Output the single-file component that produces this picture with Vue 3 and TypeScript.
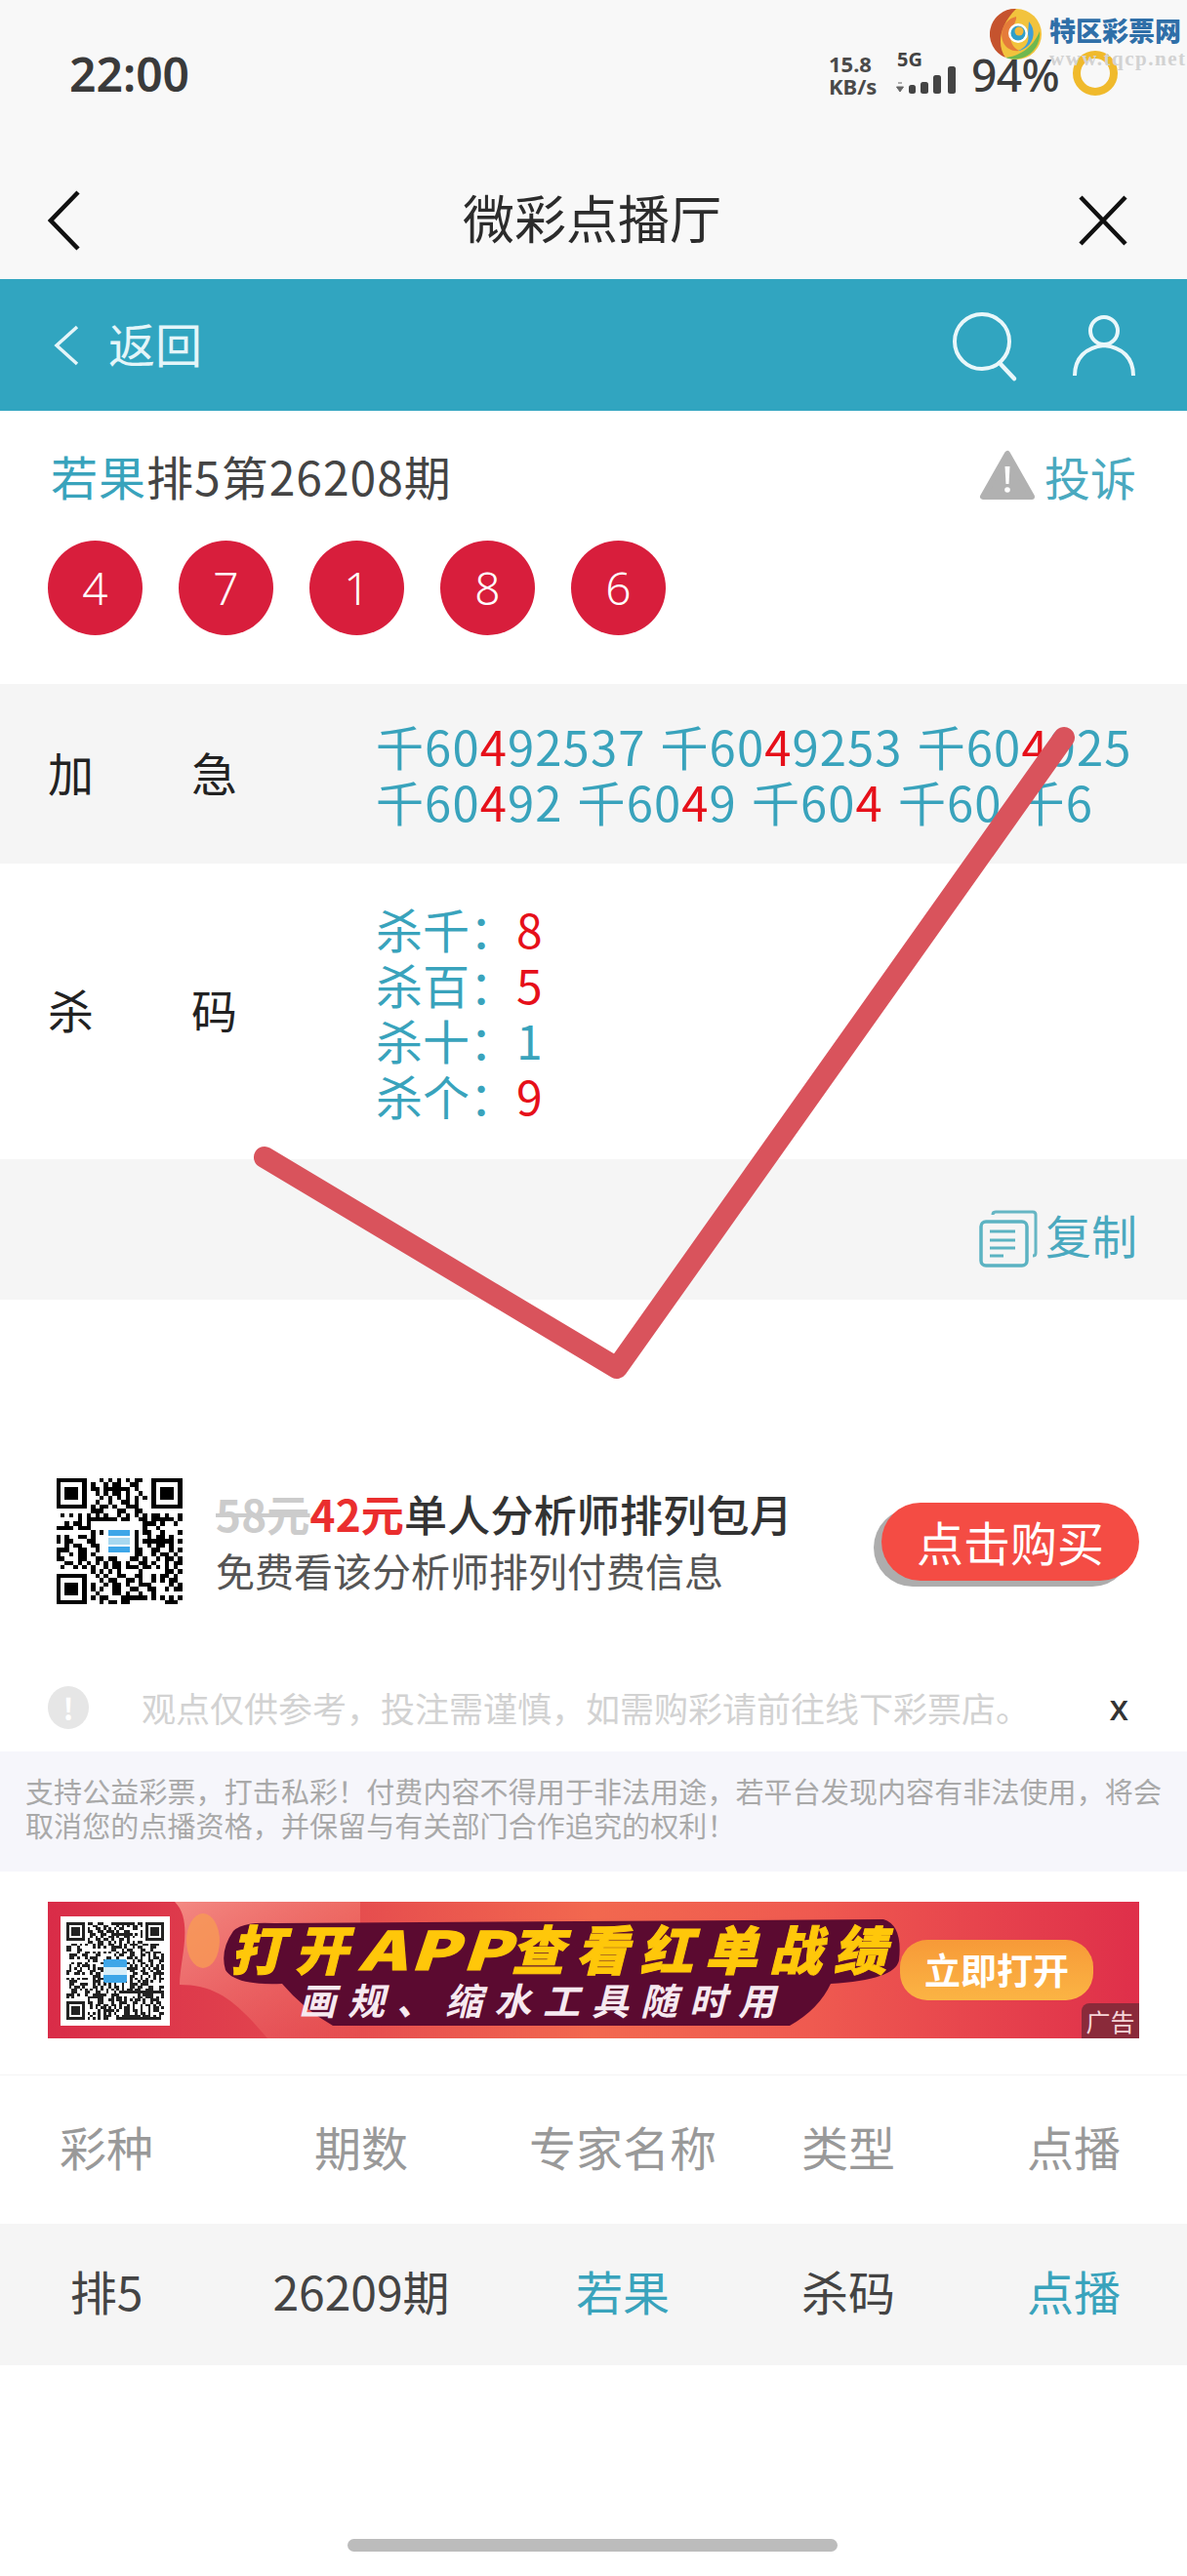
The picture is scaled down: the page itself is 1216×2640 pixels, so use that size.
<script setup lang="ts">
function makeQr(n: number, seed: number): string {
  let s = seed;
  const rnd = () => {
    s = (s * 1103515245 + 12345) & 0x7fffffff;
    return (s >> 12) & 1;
  };
  const inFinder = (x: number, y: number) =>
    (x < 8 && y < 8) || (x >= n - 8 && y < 8) || (x < 8 && y >= n - 8);
  let d = "";
  const cell = (x: number, y: number, w = 1, h = 1) => {
    d += `M${x} ${y}h${w}v${h}h${-w}z`;
  };
  const finder = (x: number, y: number) => {
    cell(x, y, 7, 1);
    cell(x, y + 6, 7, 1);
    cell(x, y + 1, 1, 5);
    cell(x + 6, y + 1, 1, 5);
    cell(x + 2, y + 2, 3, 3);
  };
  finder(0, 0);
  finder(n - 7, 0);
  finder(0, n - 7);
  const c = Math.floor(n / 2);
  for (let y = 0; y < n; y++) {
    for (let x = 0; x < n; x++) {
      if (inFinder(x, y)) continue;
      if (Math.abs(x - c) <= 3 && Math.abs(y - c) <= 3) continue;
      if (rnd()) cell(x, y);
    }
  }
  return d;
}
const qrLarge = makeQr(29, 77);
const qrSmall = makeQr(37, 4242);

const balls = [4, 7, 1, 8, 6];
const lines = [
  ["60|4|92537", "60|4|9253", "60|4|925"],
  ["60|4|92", "60|4|9", "60|4|", "60||", "6||"],
];
const kills = [
  { name: "杀千：", value: "8", red: true },
  { name: "杀百：", value: "5", red: true },
  { name: "杀十：", value: "1", red: false },
  { name: "杀个：", value: "9", red: true },
];
const heads = ["彩种", "期数", "专家名称", "类型", "点播"];
</script>

<template>
  <div class="page">
    <header class="status">
      <span class="time">22:00</span>
      <div class="status-right">
        <div class="speed"><span>15.8</span><span>KB/s</span></div>
        <div class="net">
          <span class="net-label">5G</span>
          <svg class="bars" viewBox="0 0 68 30" width="68" height="30">
            <path d="M3 18l4 0M1.500 22h7l-3.500 5z" fill="#666" stroke="#666" stroke-width="1" />
            <rect x="14" y="20" width="7" height="9" rx="2.500" fill="#444" />
            <rect x="26" y="17" width="8" height="12" rx="2.500" fill="#444" />
            <rect x="39" y="10" width="8" height="19" rx="2.500" fill="#444" />
            <rect x="54" y="1" width="8" height="28" rx="2.500" fill="#444" />
          </svg>
        </div>
        <span class="battery">94%</span>
        <span class="ring"></span>
      </div>
    </header>

    <div class="titlebar">
      <svg class="tb-back" viewBox="0 0 34 62" width="34" height="62">
        <path d="M31 2 3 31l28 29" fill="none" stroke="#111" stroke-width="4.500" />
      </svg>
      <span class="tb-title">微彩点播厅</span>
      <svg class="tb-close" viewBox="0 0 52 52" width="52" height="52">
        <path d="M3 2l46 48M49 2 3 50" fill="none" stroke="#111" stroke-width="4.500" />
      </svg>
    </div>

    <nav class="teal">
      <svg class="teal-back" viewBox="0 0 26 42" width="26" height="42">
        <path d="M24 2 3 21l21 19" fill="none" stroke="#e4f5f9" stroke-width="3.500" />
      </svg>
      <span class="teal-text">返回</span>
      <svg class="teal-search" viewBox="0 0 70 72" width="70" height="72">
        <circle cx="32" cy="30" r="28" fill="none" stroke="#e9f7fa" stroke-width="4" />
        <path d="M50 52l15 16" fill="none" stroke="#e9f7fa" stroke-width="4.500" stroke-linecap="round" />
      </svg>
      <svg class="teal-user" viewBox="0 0 66 64" width="66" height="64">
        <circle cx="33" cy="16" r="14" fill="none" stroke="#e9f7fa" stroke-width="4" />
        <path d="M3 62C3 44 14 33 33 31c19 2 30 13 30 31" fill="none" stroke="#e9f7fa" stroke-width="4" />
      </svg>
    </nav>

    <section class="info">
      <div class="info-head">
        <div class="info-title"><span class="teal-c">若果</span>排5第26208期</div>
        <div class="side-action">
          <svg viewBox="0 0 60 54" width="60" height="54">
            <path d="M30 4 5 48h50z" fill="#b1b1b1" stroke="#b1b1b1" stroke-width="6" stroke-linejoin="round" />
            <path d="M27.500 17h5l-1 18h-3z" fill="#fff" />
            <circle cx="30" cy="41" r="2.800" fill="#fff" />
          </svg>
          <span>投诉</span>
        </div>
      </div>
      <div class="balls">
        <span v-for="(b, i) in balls" :key="i" class="ball">{{ b }}</span>
      </div>
    </section>

    <section class="row row-urgent">
      <div class="label"><span>加</span><span>急</span></div>
      <div class="value">
        <div v-for="(line, i) in lines" :key="i" class="combo-line">
          <span v-for="(combo, j) in line" :key="j" class="combo">千{{ combo.split("|")[0] }}<span class="red-c">{{ combo.split("|")[1] }}</span>{{ combo.split("|")[2] }}</span>
        </div>
      </div>
    </section>

    <section class="row row-kill">
      <div class="label"><span>杀</span><span>码</span></div>
      <div class="value">
        <div v-for="k in kills" :key="k.name" class="kill-line">
          {{ k.name }}<span :class="k.red ? 'red-c' : ''">{{ k.value }}</span>
        </div>
      </div>
    </section>

    <section class="copy">
      <div class="side-action">
        <svg class="copy-icon" viewBox="0 0 60 59" width="60" height="59">
          <path d="M14 5c0-2 1-3 3-3h38c2 0 3 1 3 3v39c0 2-1 3-3 3" fill="none" stroke="#66b6c4" stroke-width="3" />
          <rect x="2" y="12" width="47" height="45" rx="5" fill="none" stroke="#5bb3c2" stroke-width="3.500" />
          <path d="M11 22h26M11 31h26M11 39h26M11 47h14" fill="none" stroke="#5bb3c2" stroke-width="3" />
        </svg>
        <span>复制</span>
      </div>
    </section>

    <section class="promo">
      <div class="qr-large">
        <svg viewBox="0 0 29 29" width="130" height="129" shape-rendering="crispEdges">
          <path :d="qrLarge" fill="#000" />
          <rect x="11.500" y="11.500" width="6" height="6" fill="#fff" />
          <rect x="12" y="12" width="5" height="1.300" fill="#3ea6e8" />
          <rect x="12" y="13.800" width="5" height="1.400" fill="#a8d8f0" />
          <rect x="12" y="15.700" width="5" height="1.300" fill="#3ea6e8" />
        </svg>
      </div>
      <div class="promo-text">
        <div class="promo-title"><span class="old">58元</span><span class="new">42元</span>单人分析师排列包月</div>
        <div class="promo-sub">免费看该分析师排列付费信息</div>
      </div>
      <div class="buy">点击购买</div>
    </section>

    <section class="notice">
      <span class="notice-icon">!</span>
      <span class="notice-text">观点仅供参考，投注需谨慎，如需购彩请前往线下彩票店。</span>
      <span class="notice-close">x</span>
    </section>

    <section class="legal">
      支持公益彩票，打击私彩！付费内容不得用于非法用途，若平台发现内容有非法使用，将会取消您的点播资格，并保留与有关部门合作追究的权利！
    </section>

    <section class="banner">
      <svg class="banner-deco" viewBox="0 0 1118 140" width="1118" height="140">
        <defs>
          <linearGradient id="swoosh" x1="0" y1="0" x2="1" y2="1">
            <stop offset="0" stop-color="#ffb4a0" stop-opacity="0.650" />
            <stop offset="1" stop-color="#ff9a80" stop-opacity="0" />
          </linearGradient>
        </defs>
        <path d="M130 0C150 20 135 60 135 85c40 0 60 20 90 55H320V0z" fill="url(#swoosh)" />
        <ellipse cx="159" cy="40" rx="17" ry="28" fill="#f79a55" opacity="0.800" />
        <path
          d="M190 30Q200 20 232 22L856 18Q876 24 872 60 868 80 802 84 790 110 760 127L292 127Q262 110 240 84 192 86 182 70 176 50 190 30z"
          fill="#5b0a30"
        />
      </svg>
      <div class="banner-qr">
        <svg viewBox="0 0 37 37" width="100" height="100" shape-rendering="crispEdges">
          <path :d="qrSmall" fill="#222" />
          <rect x="14" y="14" width="9" height="9" rx="1.500" fill="#3ea6e8" />
          <rect x="14" y="17" width="9" height="3" fill="#d6eefa" />
        </svg>
      </div>
      <div class="banner-main">打开<span class="banner-app">APP</span>查看红单战绩</div>
      <div class="banner-sub">画规、缩水工具随时用</div>
      <div class="banner-btn">立即打开</div>
      <div class="banner-ad">广告</div>
    </section>

    <section class="table">
      <div class="t-row t-head">
        <span v-for="h in heads" :key="h">{{ h }}</span>
      </div>
      <div class="t-row t-data">
        <span>排5</span>
        <span>26209期</span>
        <span class="teal-c">若果</span>
        <span>杀码</span>
        <span class="teal-c">点播</span>
      </div>
    </section>

    <div class="home-bar"></div>

    <svg class="check" viewBox="0 0 1216 2640" width="1216" height="2640">
      <path
        d="M271 1186 632 1402 1090 756"
        fill="none"
        stroke="#d9535c"
        stroke-width="22"
        stroke-linecap="round"
        stroke-linejoin="round"
      />
    </svg>

    <div class="watermark">
      <svg viewBox="0 0 54 54" width="54" height="54">
        <circle cx="27" cy="27" r="26" fill="#f2c33d" />
        <path d="M27 1A26 26 0 0 0 16 51C8 40 8 20 27 1z" fill="#c5532e" />
        <path d="M51 24A26 26 0 0 1 16 51C28 50 44 42 51 24z" fill="#6fb84f" />
        <path d="M27 9C15 12 9 24 14 36c3 6 10 9 16 8-7-4-10-10-8-18 1-7 6-13 5-17z" fill="#e57b3a" />
        <path d="M40 14c7 8 6 20-2 26-3 2-6 4-9 4 8-3 12-10 10-17z" fill="#3f9ed9" />
        <circle cx="29" cy="26" r="10" fill="#fff" />
        <circle cx="29" cy="26" r="7.500" fill="#2f9fc9" />
        <circle cx="30" cy="24" r="4.500" fill="#f2b93b" />
      </svg>
      <div class="wm-text">
        <span class="wm-name">特区彩票网</span>
        <span class="wm-url">www.tqcp.net</span>
      </div>
    </div>
  </div>
</template>

<style scoped>
.page {
  position: relative;
  width: 1216px;
  height: 2640px;
  overflow: hidden;
  background: #fff;
  font-family: "Noto Sans CJK SC", "Noto Sans", sans-serif;
  color: #333;
}
.teal-c { color: #39a3bc; }
.red-c { color: #e6101a; }

.status {
  height: 158px;
  box-sizing: border-box;
  background: #f8f8f8;
  padding: 46px 71px 0;
  display: flex;
  justify-content: space-between;
  align-items: flex-start;
}
.time {
  font-family: "Noto Sans", sans-serif;
  font-size: 48px;
  line-height: 60px;
  font-weight: 600;
  color: #3a3a3a;
}
.status-right {
  display: flex;
  align-items: flex-start;
  color: #3c3c3c;
}
.speed {
  display: flex;
  flex-direction: column;
  width: 70px;
  font-family: "Noto Sans", sans-serif;
  font-size: 22px;
  line-height: 23px;
  font-weight: 700;
  margin-top: 8px;
  color: #4a4a4a;
}
.net {
  display: flex;
  flex-direction: column;
  width: 76px;
  margin-top: 5px;
}
.net-label {
  font-family: "Noto Sans", sans-serif;
  font-size: 20px;
  line-height: 20px;
  font-weight: 700;
  color: #444;
}
.bars { margin-top: -4px; margin-left: -2px; }
.battery {
  font-family: "Noto Sans", sans-serif;
  font-size: 46px;
  line-height: 60px;
  font-weight: 500;
  color: #3c3c3c;
  width: 104px;
  letter-spacing: -0.500px;
}
.ring {
  width: 46px;
  height: 46px;
  box-sizing: border-box;
  border-radius: 50%;
  border: 8px solid #f0ba2c;
  margin-top: 6px;
}

.titlebar {
  height: 128px;
  background: #f8f8f8;
  display: flex;
  align-items: center;
  justify-content: space-between;
  padding: 0 60px 0 49px;
}
.tb-back, .tb-close { flex: none; margin-top: 8px; }
.tb-title {
  font-size: 53px;
  line-height: 60px;
  color: #2c2c2c;
  margin-left: 26px;
}

.teal {
  height: 135px;
  background: #31a5c0;
  display: flex;
  align-items: center;
  padding: 0 52px 0 55px;
}
.teal-text {
  font-size: 48px;
  line-height: 60px;
  color: #e4f5f9;
  margin-left: 30px;
  margin-right: auto;
  margin-bottom: 6px;
}
.teal-search { margin-top: 4px; margin-right: 54px; }
.teal-user { margin-top: 2px; }

.info {
  height: 280px;
  box-sizing: border-box;
  padding: 40px 52px 0 49px;
}
.info-head {
  display: flex;
  justify-content: space-between;
  align-items: center;
  height: 54px;
}
.info-title {
  font-size: 48px;
  line-height: 54px;
  letter-spacing: 1px;
  padding-left: 3px;
  color: #444;
  margin-top: -2px;
}
.side-action {
  display: flex;
  align-items: center;
  gap: 8px;
  font-size: 47px;
  line-height: 54px;
  color: #4aa9bf;
}
.balls {
  display: flex;
  gap: 37px;
  margin-top: 39px;
}
.ball {
  width: 97px;
  height: 97px;
  border-radius: 50%;
  background: #d81e3c;
  color: #fff;
  font-size: 46px;
  line-height: 97px;
  text-align: center;
  font-family: "Noto Sans", sans-serif;
  font-weight: 300;
}

.row {
  display: flex;
  align-items: center;
  padding-left: 49px;
}
.row-urgent { height: 184px; background: #f5f5f5; }
.row-kill { height: 303px; }
.label {
  width: 194px;
  display: flex;
  justify-content: space-between;
  font-size: 47px;
  line-height: 56px;
  color: #222;
  flex: none;
  margin-top: -5px;
}
.value {
  font-size: 49px;
  line-height: 57px;
  color: #39a3bc;
  margin-left: 142px;
}
.row-urgent .value { margin-top: -3px; }
.combo-line {
  display: flex;
  gap: 15px;
  white-space: nowrap;
}
.combo { letter-spacing: 1.100px; }
.kill-line {
  font-size: 48px;
  white-space: nowrap;
}

.copy {
  height: 144px;
  box-sizing: border-box;
  background: #f5f5f5;
  display: flex;
  align-items: center;
  justify-content: flex-end;
  padding: 10px 51px 0 0;
}
.copy-icon { margin-top: 8px; }

.promo {
  margin-top: 183px;
  height: 129px;
  display: flex;
  align-items: center;
  padding: 0 49px 0 57px;
  position: relative;
}
.qr-large { width: 130px; height: 129px; flex: none; }
.promo-text { margin-left: 34px; flex: 1; margin-top: -3px; }
.promo-title {
  font-size: 44px;
  line-height: 56px;
  font-weight: 500;
  letter-spacing: 0.200px;
  color: #333;
  white-space: nowrap;
}
.old {
  color: #ccc;
  text-decoration: line-through;
  font-weight: 700;
  font-size: 44px;
}
.new { color: #ea2e2e; font-weight: 700; font-size: 44px; }
.promo-sub {
  font-size: 40px;
  line-height: 50px;
  margin-top: 5px;
  color: #555;
  white-space: nowrap;
}
.buy {
  width: 264px;
  height: 80px;
  border-radius: 40px;
  background: #f44c44;
  color: #fff;
  font-size: 48px;
  line-height: 78px;
  text-align: center;
  box-shadow: -8px 6px 0 #adadad;
  flex: none;
}

.notice {
  margin-top: 84px;
  height: 44px;
  display: flex;
  align-items: center;
  padding-left: 49px;
  position: relative;
}
.notice-icon {
  width: 42px;
  height: 44px;
  border-radius: 50%;
  background: #e6e6e6;
  color: #fff;
  font-size: 30px;
  line-height: 44px;
  font-weight: 700;
  text-align: center;
}
.notice-text {
  margin-left: 54px;
  font-size: 35px;
  line-height: 44px;
  color: #d2d2d2;
  white-space: nowrap;
}
.notice-close {
  margin-left: auto;
  margin-right: 60px;
  font-family: "Noto Sans", sans-serif;
  font-size: 36px;
  line-height: 40px;
  font-weight: 500;
  color: #333;
}

.legal {
  margin-top: 23px;
  height: 123px;
  box-sizing: border-box;
  background: #f6f6fb;
  padding: 23px 20px 0 26px;
  font-size: 29px;
  letter-spacing: 0.100px;
  line-height: 35px;
  color: #a9a9a9;
}

.banner {
  margin: 31px 49px 0;
  width: 1118px;
  height: 140px;
  position: relative;
  overflow: hidden;
  background: linear-gradient(90deg, #d92c48 0%, #e2454e 22%, #f2684f 50%, #ef5a50 70%, #df2f4a 100%);
}
.banner-qr {
  position: absolute;
  left: 13px;
  top: 15px;
  width: 112px;
  height: 112px;
  background: #fff;
  display: flex;
  align-items: center;
  justify-content: center;
}
.banner-deco {
  position: absolute;
  left: 0;
  top: 0;
}
.banner-main {
  position: absolute;
  left: 187px;
  top: 15px;
  font-size: 54px;
  line-height: 64px;
  font-weight: 900;
  font-style: italic;
  letter-spacing: 12px;
  color: #ffc70a;
  -webkit-text-stroke: 1px #ffc70a;
  white-space: nowrap;
}
.banner-app {
  display: inline-block;
  letter-spacing: 3px;
  transform: scaleX(1.330);
  transform-origin: left center;
  margin-right: 37px;
}
.banner-sub {
  position: absolute;
  left: 257px;
  top: 77px;
  font-size: 38px;
  line-height: 46px;
  font-weight: 700;
  font-style: italic;
  letter-spacing: 12px;
  color: #f6e9f0;
  white-space: nowrap;
}
.banner-btn {
  position: absolute;
  left: 873px;
  top: 39px;
  width: 198px;
  height: 62px;
  border-radius: 28px;
  background: linear-gradient(180deg, #f79a38, #fbb444);
  color: #fff;
  font-size: 37px;
  line-height: 60px;
  font-weight: 700;
  text-align: center;
}
.banner-ad {
  position: absolute;
  right: 0;
  bottom: 0;
  width: 59px;
  height: 36px;
  background: #8a2a3a;
  border-top-left-radius: 8px;
  color: #f5d5d8;
  font-size: 25px;
  line-height: 36px;
  text-align: center;
}

.table {
  margin-top: 37px;
  border-top: 1px solid #f4f4f4;
}
.t-row {
  display: grid;
  grid-template-columns: 218px 304px 232px 230px 232px;
  align-items: center;
  text-align: center;
  font-size: 48px;
  line-height: 56px;
  box-sizing: border-box;
  padding-bottom: 9px;
}
.t-head { height: 152px; color: #999; }
.t-data { height: 145px; background: #f5f5f5; color: #444; }

.home-bar {
  width: 502px;
  height: 13px;
  margin: 178px 0 0 356px;
  border-radius: 7px;
  background: #bcbcbc;
}

.check {
  position: absolute;
  left: 0;
  top: 0;
  pointer-events: none;
}
.watermark {
  position: absolute;
  left: 1014px;
  top: 8px;
  display: flex;
  gap: 7px;
  align-items: flex-start;
}
.wm-text {
  display: flex;
  flex-direction: column;
  width: 132px;
}
.wm-name {
  font-size: 27px;
  line-height: 34px;
  font-weight: 900;
  color: #2f6fa8;
  white-space: nowrap;
  margin-top: 6px;
}
.wm-url {
  font-family: "Liberation Serif", serif;
  font-size: 21px;
  line-height: 24px;
  font-weight: 700;
  letter-spacing: 1.500px;
  color: #d2d2d2;
  white-space: nowrap;
}
</style>
